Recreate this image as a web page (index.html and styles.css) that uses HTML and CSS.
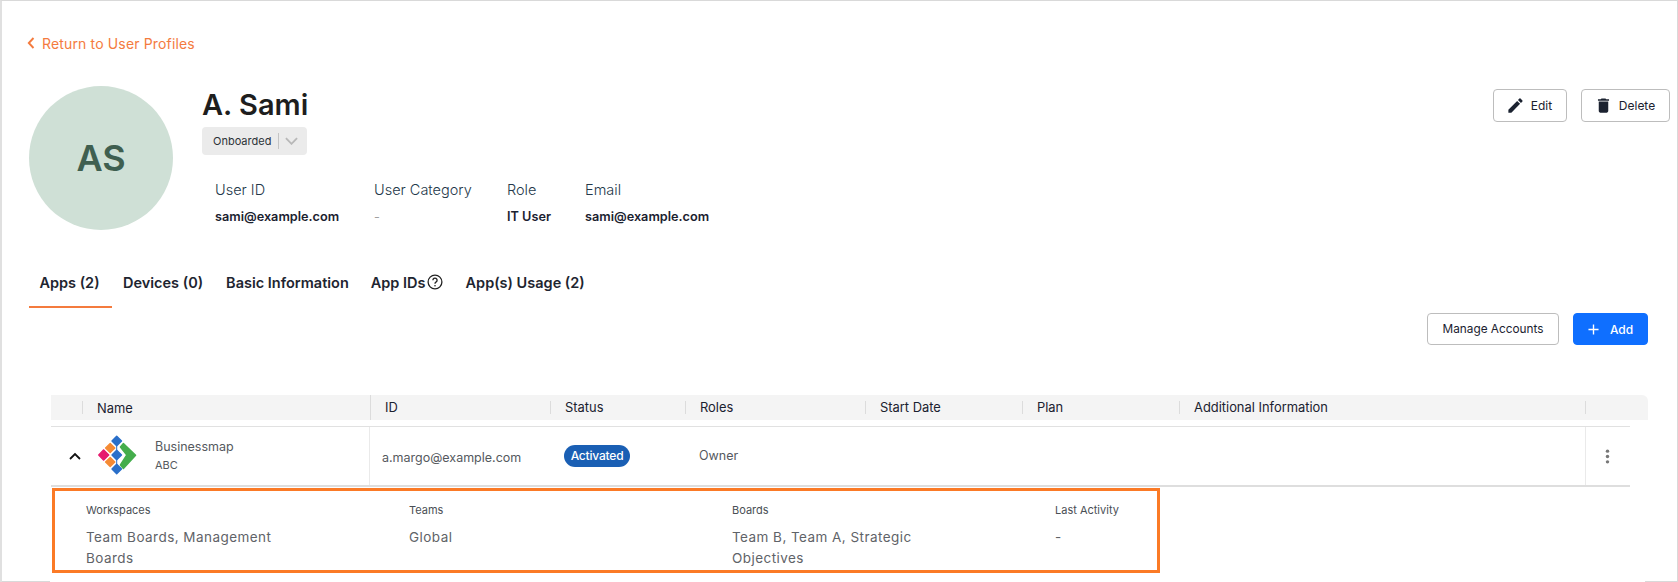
FILE: index.html
```html
<!DOCTYPE html>
<html lang="en">
<head>
<meta charset="utf-8">
<title>A. Sami</title>
<link rel="stylesheet" href="styles.css">
</head>
<body>
<div class="frame">
  <a class="back" href="#">
    <svg class="back-icon" viewBox="0 0 8 12"><path d="M6.5 1 L1.8 6 L6.5 11" fill="none" stroke="#f47b3e" stroke-width="1.9"/></svg>
    <span>Return to User Profiles</span>
  </a>

  <section class="profile">
    <div class="avatar">AS</div>
    <div class="info">
      <h1 class="name">A. Sami</h1>
      <div class="status-select">
        <span class="status-text">Onboarded</span>
        <span class="status-div"></span>
        <svg class="status-chev" viewBox="0 0 14 8"><path d="M1 1 L7 7 L13 1" fill="none" stroke="#b8b8b8" stroke-width="2"/></svg>
      </div>
      <div class="meta">
        <div class="meta-col c1"><div class="meta-label">User ID</div><div class="meta-value">sami@example.com</div></div>
        <div class="meta-col c2"><div class="meta-label">User Category</div><div class="meta-value muted">-</div></div>
        <div class="meta-col c3"><div class="meta-label">Role</div><div class="meta-value">IT User</div></div>
        <div class="meta-col"><div class="meta-label">Email</div><div class="meta-value">sami@example.com</div></div>
      </div>
    </div>
    <div class="actions">
      <button class="btn btn-edit">
        <svg class="btn-icon" viewBox="0 0 24 24"><path fill="#1b2230" d="M3 17.25V21h3.75L17.81 9.94l-3.75-3.75L3 17.25zM20.71 7.04a1 1 0 0 0 0-1.41l-2.34-2.34a1 1 0 0 0-1.41 0l-1.83 1.83 3.75 3.75 1.83-1.83z"/></svg>
        Edit
      </button>
      <button class="btn btn-delete">
        <svg class="btn-icon" viewBox="0 0 24 24"><path fill="#1b2230" d="M6 19c0 1.1.9 2 2 2h8c1.1 0 2-.9 2-2V7H6v12zM19 4h-3.5l-1-1h-5l-1 1H5v2h14V4z"/></svg>
        Delete
      </button>
    </div>
  </section>

  <nav class="tabs">
    <a class="tab active" href="#">Apps (2)</a>
    <a class="tab tab-devices" href="#">Devices (0)</a>
    <a class="tab" href="#">Basic Information</a>
    <a class="tab tab-help" href="#">App IDs
      <svg class="help" viewBox="0 0 16 16"><circle cx="8" cy="8" r="6.9" fill="none" stroke="#222" stroke-width="1.3"/><path d="M5.9 6.2a2.1 2.1 0 1 1 3.3 1.7c-.8.5-1.2.9-1.2 1.8" fill="none" stroke="#222" stroke-width="1.3"/><circle cx="8" cy="11.8" r=".8" fill="#222"/></svg>
    </a>
    <a class="tab" href="#">App(s) Usage (2)</a>
  </nav>

  <div class="toolbar">
    <button class="btn btn-manage">Manage Accounts</button>
    <button class="btn btn-add">
      <svg class="add-icon" viewBox="0 0 12 12"><path d="M6 .5v11M.5 6h11" stroke="#fff" stroke-width="1.5" fill="none"/></svg>
      Add
    </button>
  </div>

  <section class="table">
    <div class="thead">
      <div class="th th-first"></div>
      <div class="th th-name">Name</div>
      <div class="th th-tall">ID</div>
      <div class="th">Status</div>
      <div class="th">Roles</div>
      <div class="th">Start Date</div>
      <div class="th">Plan</div>
      <div class="th">Additional Information</div>
      <div class="th"></div>
    </div>
    <div class="trow">
      <div class="td td-name">
        <svg class="row-chev" viewBox="0 0 12 8"><path d="M1 7 L6 2 L11 7" fill="none" stroke="#111" stroke-width="1.8"/></svg>
        <svg class="logo" viewBox="0 0 40 40">
          <path fill="#e6186d" d="M5.5 14.8 L10.8 20 L5.5 25.2 L.7 20Z" stroke="#e6186d" stroke-width="1.2" stroke-linejoin="round"/>
          <g fill="#f58a34" stroke="#f58a34" stroke-width="1.4" stroke-linejoin="round">
            <path d="M12.2 8.5 L16.8 13 L12.2 17.5 L7.6 13Z"/>
            <path d="M12.2 22.5 L16.8 27 L12.2 31.5 L7.6 27Z"/>
          </g>
          <g fill="#2a6fc9" stroke="#2a6fc9" stroke-width="1.4" stroke-linejoin="round">
            <path d="M18.7 1.3 L23.5 6 L18.7 10.7 L14 6Z"/>
            <path d="M18.7 15.3 L23.5 20 L18.7 24.7 L14 20Z"/>
            <path d="M18.7 29.3 L23.5 34 L18.7 38.7 L14 34Z"/>
            <path d="M18.7 9 V32" stroke-width="1"/>
          </g>
          <path fill="#44ad4c" stroke="#44ad4c" stroke-width="1.4" stroke-linejoin="round" d="M25.4 8.5 L37.6 20.3 L25.4 33.5 L22.4 30 L28.8 20 L22.4 12Z"/>
        </svg>
        <div class="app">
          <div class="app-name">Businessmap</div>
          <div class="app-sub">ABC</div>
        </div>
      </div>
      <div class="td td-id">a.margo@example.com</div>
      <div class="td td-status"><span class="badge">Activated</span></div>
      <div class="td td-role">Owner</div>
      <div class="td"></div>
      <div class="td"></div>
      <div class="td"></div>
      <div class="td td-more">
        <svg class="kebab" viewBox="0 0 4 14"><circle cx="2" cy="2" r="1.6"/><circle cx="2" cy="7" r="1.6"/><circle cx="2" cy="12" r="1.6"/></svg>
      </div>
    </div>
    <div class="detail">
      <div class="d-col"><div class="d-label">Workspaces</div><div class="d-value">Team Boards, Management Boards</div></div>
      <div class="d-col"><div class="d-label">Teams</div><div class="d-value">Global</div></div>
      <div class="d-col"><div class="d-label">Boards</div><div class="d-value">Team B, Team A, Strategic Objectives</div></div>
      <div class="d-col"><div class="d-label">Last Activity</div><div class="d-value">-</div></div>
    </div>
  </section>
  <div class="edge edge-left"></div>
  <div class="edge edge-right"></div>
</div>
</body>
</html>
```

FILE: styles.css
```css
* { box-sizing: border-box; }
html, body { margin: 0; padding: 0; background: #fff; }
body { font-family: Inter, "Liberation Sans", sans-serif; color: #1b2230; }
a { text-decoration: none; color: inherit; }

.frame {
  position: relative;
  width: 1678px;
  height: 582px;
  overflow: hidden;
  border-top: 1px solid #d9d9d9;
  border-left: 2px solid #e0e0e0;
  border-right: 1px solid #d9d9d9;
}
.edge { position: absolute; bottom: 0; height: 1px; background: #d9d9d9; }
.edge-left { left: -2px; width: 50px; }
.edge-right { right: 0; width: 32px; }

.back {
  display: flex;
  align-items: center;
  gap: 7px;
  margin: 34px 0 0 25px;
  height: 16px;
  font-size: 14px;
  letter-spacing: .15px;
  color: #f47b3e;
}
.back-icon { width: 8px; height: 12px; }

.profile { display: flex; margin: 35px 0 0 27px; height: 144px; }
.avatar {
  width: 144px;
  height: 144px;
  flex: none;
  border-radius: 50%;
  background: #cfe0d6;
  color: #3f5f50;
  font-size: 36px;
  font-weight: 600;
  display: flex;
  align-items: center;
  justify-content: center;
}
.info { margin-left: 29px; flex: 1; }
.name {
  margin: 1px 0 0;
  font-size: 29px;
  line-height: 35px;
  font-weight: 600;
  color: #1e1e1e;
}
.status-select {
  margin-top: 5px;
  width: 105px;
  height: 28px;
  border-radius: 4px;
  background: #ebebeb;
  display: flex;
  align-items: center;
  padding-left: 11px;
}
.status-text { font-size: 11px; color: #2c3238; width: 65px; flex: none; white-space: nowrap; }
.status-div { width: 1px; height: 16px; background: #c4c4c4; flex: none; }
.status-chev { width: 13px; height: 8px; margin-left: 6px; }
.meta { display: flex; margin: 25px 0 0 13px; }
.meta-col { flex: none; }
.c1 { width: 159px; }
.c2 { width: 133px; }
.c3 { width: 78px; }
.meta-label { font-size: 14.5px; line-height: 20px; font-weight: 300; color: #24384a; }
.meta-value { font-size: 12.7px; line-height: 20px; font-weight: 600; margin-top: 7px; color: #1b2230; white-space: nowrap; }
.muted { color: #a0a0a0; font-weight: 400; }

.actions { display: flex; gap: 14px; margin-top: 3px; align-items: flex-start; margin-right: 7px; }
.btn {
  font-family: inherit;
  font-size: 12px;
  color: #1b2230;
  background: #fff;
  border: 1px solid #bdbdbd;
  border-radius: 4px;
  display: flex;
  align-items: center;
  justify-content: center;
  cursor: pointer;
  padding: 0;
}
.btn-edit { width: 74px; height: 33px; gap: 6px; padding-right: 2px; }
.btn-delete { width: 89px; height: 33px; gap: 6px; padding-right: 2px; }
.btn-icon { width: 19px; height: 19px; flex: none; }

.tabs { display: flex; margin: 33px 0 0 27px; height: 45px; }
.tab {
  font-size: 14.5px;
  font-weight: 600;
  color: #1e2530;
  padding: 11px 11px 0;
  line-height: 18px;
  display: flex;
  align-items: flex-start;
  gap: 1px;
  white-space: nowrap;
}
.tab.active { border-bottom: 2px solid #f47b3e; width: 83px; justify-content: center; padding: 11px 2px 0 0; }
.tab-devices { padding-right: 12px; }
.help { width: 16px; height: 16px; flex: none; }
.tab-help { padding-right: 12px; }

.toolbar { display: flex; justify-content: flex-end; gap: 14px; margin: 5px 29px 0 0; }
.btn-manage { width: 132px; height: 32px; font-size: 11.8px; }
.btn-add { width: 75px; height: 32px; background: #0f6fff; border-color: #0f6fff; color: #fff; font-weight: 500; gap: 11px; }
.add-icon { width: 11px; height: 11px; }

.table { margin: 50px 0 0 49px; width: 1597px; }
.thead, .trow {
  display: grid;
  grid-template-columns: 31px 288px 180px 135px 180px 157px 157px 406px 63px;
}
.thead { height: 25px; background: #f4f4f4; border-top-right-radius: 6px; }
.th {
  position: relative;
  font-size: 12.9px;
  line-height: 25px;
  padding-left: 15px;
  color: #1b2230;
}
.th-name { padding-top: 1px; }
.th::before {
  content: "";
  position: absolute;
  left: 0;
  top: 6px;
  width: 1px;
  height: 13px;
  background: #dcdcdc;
}
.th-first::before { display: none; }
.th-tall::before { top: 0; height: 25px; }

.trow {
  width: 1579px;
  height: 61px;
  margin-top: 6px;
  border-top: 1px solid #e1e1e1;
  border-bottom: 2px solid #dedede;
  grid-template-columns: 319px 180px 135px 180px 157px 157px 406px 45px;
}
.td { font-size: 12.5px; color: #55595e; display: flex; align-items: center; min-width: 0; }
.td-name { border-right: 1px solid #eaeaea; padding-left: 18px; }
.row-chev { width: 12px; height: 8px; flex: none; }
.logo { width: 40px; height: 40px; margin-left: 17px; margin-bottom: 2px; flex: none; }
.app { margin-left: 17px; padding-bottom: 2px; }
.app-name { font-size: 12.5px; line-height: 18px; color: #55595e; }
.app-sub { font-size: 11px; line-height: 16px; margin-top: 1px; color: #55595e; }
.td-id { padding-left: 12px; padding-top: 2px; }
.td-status { padding-left: 14px; }
.td-role { padding-left: 14px; padding-bottom: 2px; }
.badge {
  background: #1a5fb4;
  color: #fff;
  font-size: 12px;
  font-weight: 500;
  height: 22px;
  line-height: 22px;
  border-radius: 11px;
  width: 66px;
  text-align: center;
  white-space: nowrap;
  letter-spacing: -.2px;
}
.td-more { border-left: 1px solid #eaeaea; padding-left: 19px; }
.kebab { width: 5px; height: 15px; fill: #777; }

.detail {
  margin: 1px 0 0 1px;
  width: 1108px;
  height: 85px;
  border: 3px solid #fb7a26;
  display: grid;
  grid-template-columns: repeat(4, 323px);
  padding: 12px 0 0 31px;
}
.d-label { font-size: 11px; line-height: 14px; color: #4a4f55; }
.d-value { font-size: 13.5px; line-height: 21px; margin-top: 10px; width: 205px; letter-spacing: .45px; color: #5f6368; }
```
